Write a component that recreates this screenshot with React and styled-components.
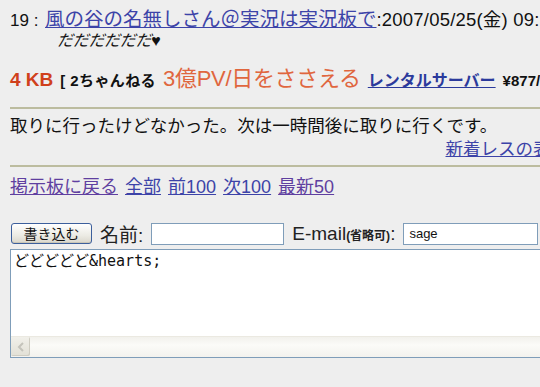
import React from "react";
import styled, { createGlobalStyle } from "styled-components";

const GlobalStyle = createGlobalStyle`
  html, body {
    margin: 0;
    padding: 0;
    background: #eeeeee;
    overflow: hidden;
  }
  body {
    font-family: "Liberation Sans", "Noto Sans CJK JP", sans-serif;
    color: #111;
  }
`;

const Page = styled.div`
  width: 568px;
  padding: 8px 0 0 10px;
  box-sizing: border-box;
`;

const Head = styled.div`
  display: flex;
  align-items: baseline;
  font-size: 19.5px;
  line-height: 22px;
  white-space: nowrap;

  & > * {
    flex: none;
  }
`;

const Num = styled.span`
  width: 35px;
  font-size: 17px;
`;

const Link = styled.a`
  color: ${(p) => (p.$visited ? "#5f3fa0" : "#3c43a8")};
  text-decoration: underline;
  cursor: pointer;
`;

const Date = styled.span`
  font-size: 18.5px;
  letter-spacing: 0.2px;
`;

const Body = styled.div`
  padding-left: 47px;
  font-size: 16px;
  line-height: 18px;
  font-style: italic;
  letter-spacing: -0.3px;
  white-space: nowrap;
`;

const Ad = styled.div`
  display: flex;
  align-items: baseline;
  gap: 7px;
  margin-top: 15px;
  line-height: 28px;
  white-space: nowrap;

  & > * {
    flex: none;
  }
`;

const Size = styled.span`
  color: #d0401c;
  font-size: 19px;
  font-weight: bold;
`;

const Brand = styled.span`
  font-size: 15px;
  font-weight: bold;
  letter-spacing: 0.4px;
`;

const Slogan = styled.span`
  color: #e0663e;
  font-size: 22px;
  letter-spacing: -0.3px;
`;

const Server = styled.a`
  color: #2b3a9c;
  font-size: 16px;
  font-weight: bold;
  text-decoration: underline;
`;

const Price = styled.span`
  font-size: 15px;
  font-weight: bold;
`;

const Rule = styled.hr`
  border: none;
  border-top: 2px solid #bcbc9f;
  margin: ${(p) => p.$m || "0"};
  height: 0;
`;

const Message = styled.div`
  font-size: 17.5px;
  line-height: 23px;
  margin-top: 6px;
  white-space: nowrap;
`;

const NewRes = styled.div`
  text-align: right;
  font-size: 17.5px;
  line-height: 22px;
  margin-bottom: 5px;
  white-space: nowrap;
`;

const Nav = styled.div`
  display: flex;
  gap: 7px;
  font-size: 18px;
  line-height: 24px;
  margin-top: 8px;
  white-space: nowrap;
`;

const Form = styled.form`
  margin-top: 23px;
`;

const Row = styled.div`
  display: flex;
  align-items: center;
  gap: 8px;
  height: 23px;
  white-space: nowrap;

  & > * {
    flex: none;
  }
`;

const Button = styled.button`
  width: 81px;
  height: 21px;
  padding: 0;
  margin-left: 1px;
  font-family: "Noto Sans CJK JP", sans-serif;
  font-size: 14px;
  line-height: 19px;
  color: #111;
  border: 1px solid #3c5f9c;
  border-radius: 3px;
  background: linear-gradient(#ffffff, #ecebe4 60%, #d9d7cc);
  box-shadow: inset 0 -1px 0 #c9c6b8;
`;

const Label = styled.span`
  font-size: 19px;
  color: #222;
`;

const Small = styled.span`
  font-size: 12px;
  font-weight: bold;
`;

const Field = styled.input`
  width: ${(p) => p.$w}px;
  height: 22px;
  box-sizing: border-box;
  border: 1px solid #7f9db9;
  background: #fff;
  padding: 0 5px;
  font-family: "Liberation Sans", sans-serif;
  font-size: 13px;
  color: #111;
  outline: none;
`;

const Box = styled.div`
  margin-top: 4px;
  width: 560px;
  height: 107px;
  border: 1px solid #7f9db9;
  background: #fff;
  display: flex;
  flex-direction: column;
`;

const Area = styled.textarea`
  flex: 1;
  border: none;
  resize: none;
  outline: none;
  padding: 2px 3px;
  font-family: "DejaVu Sans Mono", "Noto Sans CJK JP", monospace;
  font-size: 15px;
  line-height: 18px;
  color: #111;
  background: #fff;
  overflow: hidden;
`;

const Scroll = styled.div`
  height: 20px;
  display: flex;
  background: linear-gradient(#f2f1ec, #fbfbf8 40%, #f3f2ee);
  border-top: 1px solid #ebe9e1;
`;

const Arrow = styled.div`
  width: 19px;
  height: 19px;
  border-radius: 2px;
  background: linear-gradient(#f1f0ea, #e2e0d6);
  box-shadow: inset -1px -1px 0 #cfcdc2;
  display: flex;
  align-items: center;
  justify-content: center;
`;

export default function App() {
  return (
    <>
      <GlobalStyle />
      <Page>
        <Head>
          <Num>19 :</Num>
          <Link>風の谷の名無しさん＠実況は実況板で</Link>
          <Date>:2007/05/25(金) 09:12:44</Date>
        </Head>
        <Body>だだだだだだ♥</Body>

        <Ad>
          <Size>4 KB</Size>
          <Brand>[ 2ちゃんねる</Brand>
          <Slogan>3億PV/日をささえる</Slogan>
          <Server>レンタルサーバー</Server>
          <Price>¥877/月 ]</Price>
        </Ad>

        <Rule $m="12px 0 0" />
        <Message>取りに行ったけどなかった。次は一時間後に取りに行くです。</Message>
        <NewRes>
          <Link>新着レスの表示</Link>
        </NewRes>
        <Rule />

        <Nav>
          <Link $visited>掲示板に戻る</Link>
          <Link>全部</Link>
          <Link>前100</Link>
          <Link>次100</Link>
          <Link $visited>最新50</Link>
        </Nav>

        <Form onSubmit={(e) => e.preventDefault()}>
          <Row>
            <Button type="button">書き込む</Button>
            <Label>名前:</Label>
            <Field $w={133} defaultValue="" />
            <Label>
              E-mail<Small>(省略可)</Small>:
            </Label>
            <Field $w={135} defaultValue="sage" />
          </Row>
          <Box>
            <Area readOnly wrap="off" defaultValue={"どどどどど&hearts;"} />
            <Scroll>
              <Arrow>
                <svg width="8" height="10" viewBox="0 0 8 10">
                  <path d="M6 1 L2 5 L6 9" fill="none" stroke="#c4c3bb" strokeWidth="2" />
                </svg>
              </Arrow>
            </Scroll>
          </Box>
        </Form>
      </Page>
    </>
  );
}
